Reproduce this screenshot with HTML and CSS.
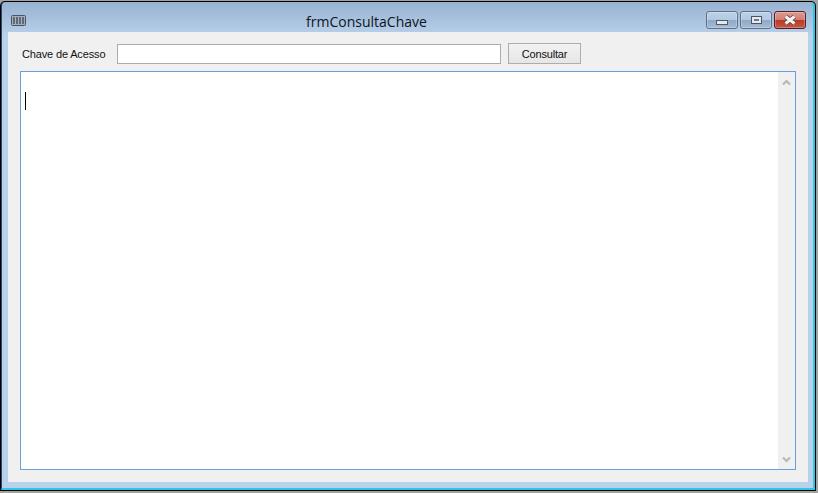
FILE: index.html
```html
<!DOCTYPE html>
<html lang="pt">
<head>
<meta charset="utf-8">
<title>frmConsultaChave</title>
<link rel="stylesheet" href="styles.css">
</head>
<body>
<div class="window">
  <div class="frame">
    <header class="titlebar">
      <svg class="app-icon" width="15" height="11" viewBox="0 0 15 11">
        <rect x="0.5" y="0.5" width="14" height="10" rx="1" fill="#a4afbc" stroke="#4a5460"/>
        <rect x="2" y="2" width="5" height="7" fill="#5f6a78"/>
        <rect x="8" y="2" width="5" height="7" fill="#5f6a78"/>
        <path d="M4.5 2v7M10.5 2v7" stroke="#aab4c0" stroke-width="1"/>
      </svg>
      <div class="title">frmConsultaChave</div>
      <div class="controls">
        <button class="ctl">
          <svg class="glyph-min" width="12" height="5" viewBox="0 0 12 5"><rect x="0.5" y="0.5" width="11" height="4" fill="#e8e8e8" stroke="#4f5a68"/></svg>
        </button>
        <button class="ctl">
          <svg width="11" height="8" viewBox="0 0 11 8"><rect x="0.5" y="0.5" width="10" height="7" fill="#e6e9ee" stroke="#4a5462"/><rect x="3" y="3" width="5" height="2" fill="#6d7c90"/></svg>
        </button>
        <button class="ctl close">
          <svg width="14" height="10" viewBox="0 0 14 10"><path d="M2.5 1.5l9 7M11.5 1.5l-9 7" fill="none" stroke="#6b3a3c" stroke-width="4.6"/><path d="M2.5 1.5l9 7M11.5 1.5l-9 7" fill="none" stroke="#f2f2f2" stroke-width="3"/></svg>
        </button>
      </div>
    </header>
    <main class="client">
      <div class="toolbar">
        <label class="label" for="chave">Chave de Acesso</label>
        <input class="field" id="chave" type="text">
        <button class="action">Consultar</button>
      </div>
      <div class="memo">
        <div class="memo-text"><span class="caret"></span></div>
        <div class="scrollbar">
          <svg width="9" height="7" viewBox="0 0 9 7"><path d="M1 5.5l3.5-3.5 3.5 3.5" fill="none" stroke="#b8b8b8" stroke-width="2.2"/></svg>
          <svg width="9" height="7" viewBox="0 0 9 7"><path d="M1 1.5l3.5 3.5 3.5-3.5" fill="none" stroke="#b8b8b8" stroke-width="2.2"/></svg>
        </div>
      </div>
    </main>
  </div>
</div>
</body>
</html>
```
FILE: styles.css
```css
html, body {
  margin: 0;
  height: 100%;
  background: #a3a3a3;
  overflow: hidden;
}
body {
  padding-top: 1px;
  box-sizing: border-box;
}
.window {
  box-sizing: border-box;
  width: 816px;
  height: 490px;
  background: #000;
  border-radius: 5px 5px 0 0;
  padding: 1px;
  font-family: "Liberation Sans", Arial, sans-serif;
}
.frame {
  box-sizing: border-box;
  height: 100%;
  display: flex;
  flex-direction: column;
  padding: 0 5px 6px 6px;
  border-radius: 4px 4px 0 0;
  background: linear-gradient(#98b3d2 0, #a5bedb 14px, #b9d1ea 34px);
  border-left: 1px solid #2b4a68;
  border-right: 2px solid #28c8e6;
  border-bottom: 2px solid #28c8e6;
}
.titlebar {
  flex: none;
  height: 30px;
  display: flex;
  align-items: center;
  position: relative;
}
.app-icon {
  margin: 6px 0 0 3px;
}
.title {
  position: absolute;
  left: 0;
  right: 0;
  top: 10px;
  padding-right: 83px;
  text-align: center;
  font-family: "Open Sans", sans-serif;
  font-size: 14px;
  line-height: 19px;
  color: #0d1420;
}
.controls {
  margin: 6px 2px 0 auto;
  display: flex;
  gap: 2px;
}
.ctl {
  box-sizing: border-box;
  width: 32px;
  height: 18px;
  padding: 0;
  display: flex;
  align-items: center;
  justify-content: center;
  border: 1px solid #5f7189;
  border-radius: 3px;
  background: linear-gradient(#bdd2e8 0, #b2c9e2 48%, #8fa9c6 52%, #a5bcd6 100%);
  box-shadow: inset 0 0 0 1px rgba(255, 255, 255, 0.25);
}
.glyph-min {
  margin-top: 4px;
}
.close {
  border-color: #5a1c2c;
  background: linear-gradient(#dc9a90 0, #d17f70 48%, #b73a24 52%, #c25a48 100%);
}
.client {
  flex: 1;
  min-height: 0;
  display: flex;
  flex-direction: column;
  background: #f0f0f0;
  padding: 11px 12px 12px;
}
.toolbar {
  flex: none;
  height: 21px;
  display: flex;
  align-items: center;
  margin-bottom: 7px;
}
.label {
  width: 97px;
  padding-left: 2px;
  box-sizing: border-box;
  font-size: 11px;
  letter-spacing: -0.15px;
  color: #111;
}
.field {
  box-sizing: border-box;
  width: 384px;
  height: 20px;
  margin: 0 7px 0 0;
  padding: 0;
  background: #fff;
  border: 1px solid #ababab;
  outline: none;
}
.action {
  box-sizing: border-box;
  width: 73px;
  height: 21px;
  padding: 0;
  background: linear-gradient(#f2f2f2, #e6e6e6);
  border: 1px solid #adadad;
  font-family: inherit;
  font-size: 11px;
  letter-spacing: -0.2px;
  color: #111;
}
.memo {
  flex: 1;
  min-height: 0;
  display: flex;
  background: #fff;
  border: 1px solid #6a9fdb;
}
.memo-text {
  flex: 1;
  padding: 20px 0 0 4px;
}
.caret {
  display: block;
  width: 1px;
  height: 18px;
  background: #000;
}
.scrollbar {
  flex: none;
  width: 17px;
  background: #f0f0f0;
  display: flex;
  flex-direction: column;
  align-items: center;
  justify-content: space-between;
  padding: 7px 0 6px;
  box-sizing: border-box;
}
```
